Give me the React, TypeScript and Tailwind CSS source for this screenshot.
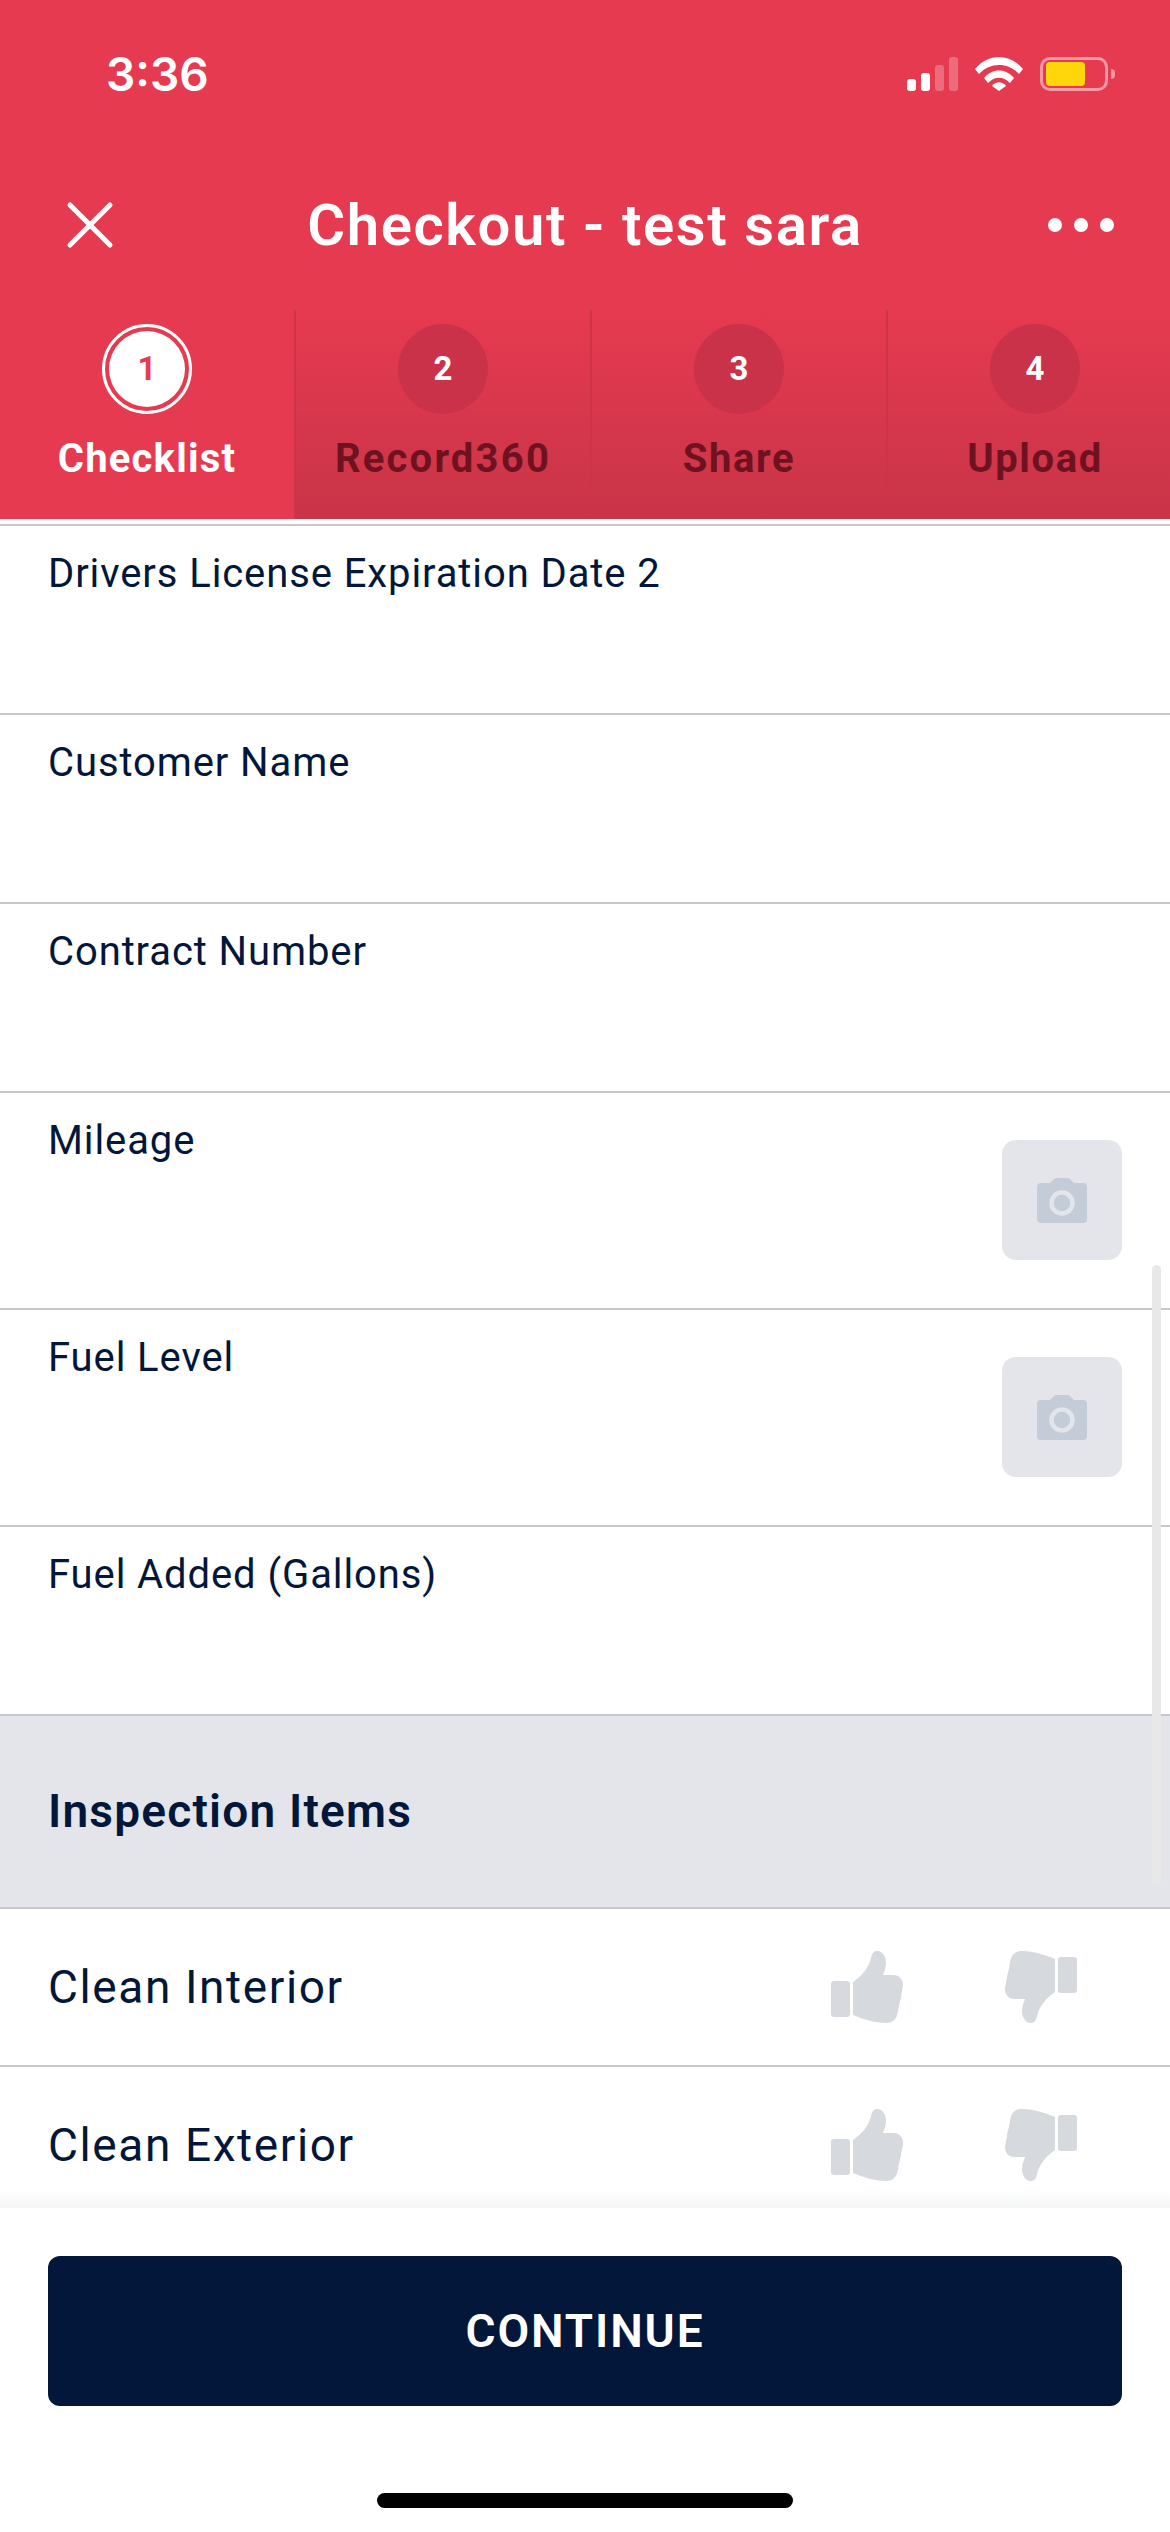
import { X } from 'lucide-react';

const FONT = "font-['Roboto',sans-serif]";

function StatusIcons() {
  return (
    <div className="flex items-start">
      {/* signal */}
      <svg width="52" height="34" viewBox="0 0 52 34" fill="#fff">
        <rect x="0" y="22" width="9" height="12" rx="3" />
        <rect x="14" y="16" width="9" height="18" rx="3" />
        <rect x="28" y="8" width="9" height="26" rx="3" opacity="0.25" />
        <rect x="42" y="0" width="9" height="34" rx="3" opacity="0.25" />
      </svg>
      {/* wifi */}
      <svg className="ml-[16px]" width="48" height="34" viewBox="0 0 48 34" fill="#fff">
        <path d="M0 12 C13 -4 35 -4 48 12 L44 17 C33 5 15 5 4 17 Z" />
        <path d="M9 21 C17 11 31 11 39 21 L35 26 C28 19 20 19 13 26 Z" />
        <path d="M17 29 C21 24 27 24 31 29 L24 34 Z" />
      </svg>
      {/* battery */}
      <div className="relative ml-[17px] flex h-[34px] w-[68px] items-center rounded-[10px] border-[3px] border-[#f39aa6] pl-[3px]">
        <div className="h-[24px] w-[39px] rounded-[4px] bg-[#ffd60a]" />
        <div className="absolute left-[68px] h-[10px] w-[4px] rounded-r-full bg-[#f39aa6]" />
      </div>
    </div>
  );
}

function Tab({
  n,
  label,
  active,
  width,
  tracking = 'tracking-[1.6px]',
}: {
  n: number;
  label: string;
  active?: boolean;
  width: string;
  tracking?: string;
}) {
  return (
    <div
      className={`flex shrink-0 flex-col items-center pt-[14px] ${width} ${
        active ? '' : 'border-l-2 border-[#cf3348] bg-gradient-to-b from-[#e63a50] to-[#c93448]'
      }`}
    >
      {active ? (
        <div className="flex h-[90px] w-[90px] items-center justify-center rounded-full border-[3px] border-white">
          <div className="flex h-[76px] w-[76px] items-center justify-center rounded-full bg-white text-[33px] font-bold text-[#e63a50]">
            {n}
          </div>
        </div>
      ) : (
        <div className="flex h-[90px] w-[90px] items-center justify-center rounded-full bg-[#c93248] text-[33px] font-bold text-white">
          {n}
        </div>
      )}
      <div
        className={`mt-[22px] text-[40px] leading-[46px] font-bold ${tracking} ${
          active ? 'text-white' : 'text-[#6f1220]'
        }`}
      >
        {label}
      </div>
    </div>
  );
}

function CameraButton() {
  return (
    <div className="flex h-[120px] w-[120px] shrink-0 items-center justify-center rounded-[14px] bg-[#e3e5ea]">
      <svg width="50" height="45" viewBox="0 0 50 45">
        <path
          d="M4 5 L13 5 L16 2 C17 0.7 18 0 20 0 L30 0 C32 0 33 0.7 34 2 L37 5 L46 5 C48.5 5 50 6.5 50 9 L50 41 C50 43.5 48.5 45 46 45 L4 45 C1.5 45 0 43.5 0 41 L0 9 C0 6.5 1.5 5 4 5 Z"
          fill="#c3ccd7"
        />
        <circle cx="25" cy="25" r="10.5" fill="none" stroke="#e3e5ea" strokeWidth="4.5" />
      </svg>
    </div>
  );
}

function Thumb({ down }: { down?: boolean }) {
  return (
    <svg className={down ? 'rotate-180' : ''} width="72" height="72" viewBox="0 0 72 72" fill="#d6d9de">
      <rect x="0" y="30" width="19" height="36" rx="3" />
      <path d="M22 31 C31 25 38 16 40 7 C41 2 43 0 46 0 C52 0 55 6 55 12 C55 17 53 21 52 24 L62 24 C69 24 72 29 72 34 C72 37 71 38 71 40 C71 42 70 43 70 46 C70 48 69 49 69 51 C68 53 68 55 67 60 C66 68 62 72 55 72 C43 72 32 68 22 64 Z" />
    </svg>
  );
}

function FieldRow({ label, camera }: { label: string; camera?: boolean }) {
  return (
    <div
      className={`flex justify-between border-b-2 border-[#c8c8c8] pl-[48px] pr-[48px] ${
        camera ? 'h-[217px] pt-[24px]' : 'h-[189px] pt-[24px]'
      }`}
    >
      <div className="text-[40px] leading-[48px] tracking-[0.9px] text-[#02173a]">{label}</div>
      {camera && (
        <div className="mt-[23px]">
          <CameraButton />
        </div>
      )}
    </div>
  );
}

function InspectionRow({ label }: { label: string }) {
  return (
    <div className="flex h-[158px] shrink-0 items-center border-b-2 border-[#c8c8c8] pl-[48px] pr-[93px]">
      <div className="flex-1 text-[46px] tracking-[1.6px] text-[#02173a]">{label}</div>
      <div className="flex gap-[102px]">
        <Thumb />
        <Thumb down />
      </div>
    </div>
  );
}

export default function App() {
  return (
    <div className={`flex h-[2532px] w-[1170px] flex-col overflow-hidden bg-white ${FONT}`}>
      {/* Header */}
      <div className="shrink-0 overflow-hidden bg-[#e63a50] text-white">
        <div className="flex h-[140px] items-start justify-between pt-[57px] pl-[106px] pr-[62px]">
          <div className="font-['Inter',sans-serif] text-[46px] leading-[35px] font-semibold">3:36</div>
          <StatusIcons />
        </div>
        <div className="grid h-[170px] grid-cols-[1fr_auto_1fr] items-center px-[56px]">
          <X className="-ml-[6px] h-[80px] w-[80px]" strokeWidth={1.5} />
          <div className="text-[58px] font-semibold tracking-[1.6px]">Checkout - test sara</div>
          <div className="flex justify-end gap-[12px]">
            <div className="h-[14px] w-[14px] rounded-full bg-white" />
            <div className="h-[14px] w-[14px] rounded-full bg-white" />
            <div className="h-[14px] w-[14px] rounded-full bg-white" />
          </div>
        </div>
        <div className="flex h-[209px]">
          <Tab n={1} label="Checklist" active width="w-[294px]" tracking="tracking-[1.2px]" />
          <Tab n={2} label="Record360" width="w-[296px]" tracking="tracking-[2.2px]" />
          <Tab n={3} label="Share" width="w-[296px]" />
          <Tab n={4} label="Upload" width="w-[296px]" />
        </div>
      </div>

      {/* Scrolled list */}
      <div className="relative flex-1 overflow-hidden pt-[5px]">
        <div className="border-t-2 border-[#c8c8c8]" />
        <FieldRow label="Drivers License Expiration Date 2" />
        <FieldRow label="Customer Name" />
        <FieldRow label="Contract Number" />
        <FieldRow label="Mileage" camera />
        <FieldRow label="Fuel Level" camera />
        <FieldRow label="Fuel Added (Gallons)" />
        <div className="flex h-[193px] items-center border-b-2 border-[#c8c8c8] bg-[#e3e5ea] pl-[48px]">
          <div className="text-[46px] font-semibold tracking-[1.2px] text-[#02173a]">Inspection Items</div>
        </div>
        <InspectionRow label="Clean Interior" />
        <InspectionRow label="Clean Exterior" />
        {/* scrollbar */}
        <div className="absolute top-[746px] left-[1152px] h-[620px] w-[9px] rounded-full bg-[#e8e8e8]" />
      </div>

      {/* Footer */}
      <div className="relative h-[324px] shrink-0 bg-white pt-[48px] pl-[48px] pr-[48px]">
        <div className="absolute bottom-full left-0 h-[18px] w-full bg-gradient-to-b from-transparent to-[#f4f5f6]" />
        <div className="flex h-[150px] items-center justify-center rounded-[12px] bg-[#02173a] text-[46px] font-semibold tracking-[1.9px] text-white">
          CONTINUE
        </div>
        <div className="mx-auto mt-[87px] h-[15px] w-[416px] rounded-full bg-black" />
      </div>
    </div>
  );
}
